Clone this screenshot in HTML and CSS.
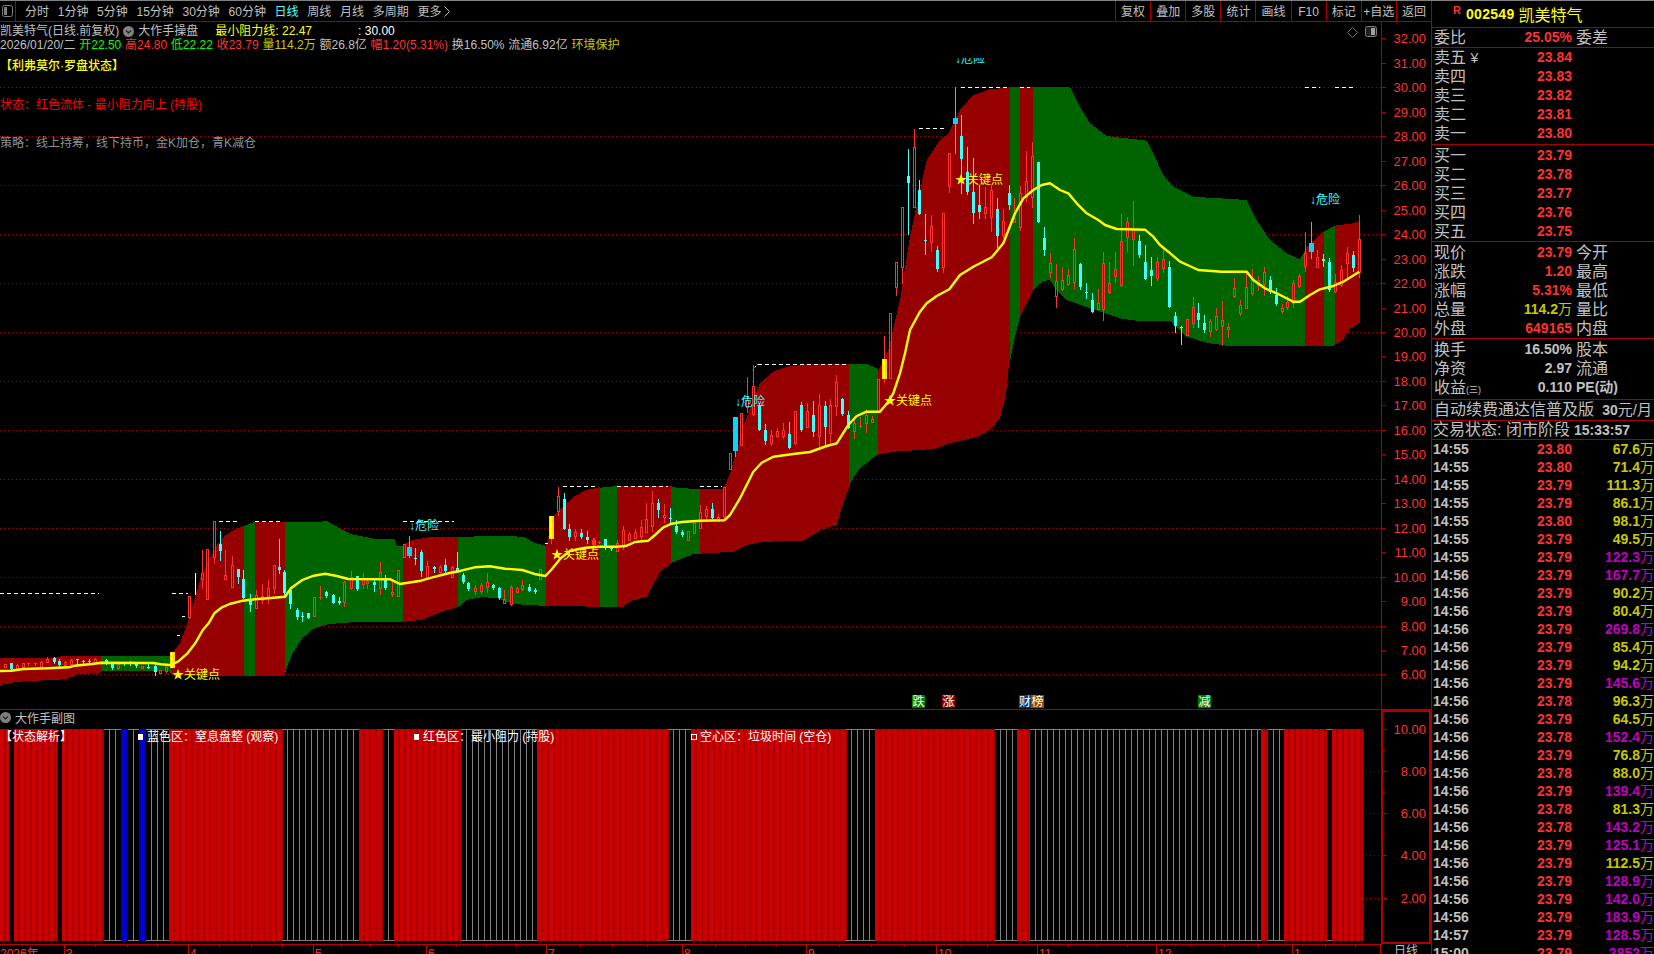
FILE: index.html
```html
<!DOCTYPE html>
<html lang="zh-CN">
<head>
<meta charset="utf-8">
<title>凯美特气 日线</title>
<link rel="stylesheet" href="styles.css">
</head>
<body>
<div class="app">
  <div class="left">
    <header class="topbar">
      <div class="tb-icon">
        <svg width="13" height="14" viewBox="0 0 13 14"><rect x="1.5" y="1.5" width="10" height="11" rx="2" fill="none" stroke="#808080"/><rect x="3" y="3" width="3" height="8" fill="#808080"/></svg>
      </div>
      <nav class="tabs">
        <span>分时</span><span>1分钟</span><span>5分钟</span><span>15分钟</span><span>30分钟</span><span>60分钟</span><span class="tab-on">日线</span><span>周线</span><span>月线</span><span>多周期</span><span>更多<svg class="chev" width="6" height="11" viewBox="0 0 6 11"><path d="M.5.5l5 5-5 5" fill="none" stroke="#c0c0c0"/></svg></span>
      </nav>
      <nav class="tools">
        <span>复权</span><span>叠加</span><span>多股</span><span>统计</span><span>画线</span><span>F10</span><span>标记</span><span>+自选</span><span>返回</span>
      </nav>
    </header>

    <section class="pane">
      <svg id="chart" class="chart" viewBox="0 22 1381 687" width="1381" height="687">
        <g id="grid"></g>
        <g id="band"></g>
        <g id="dashes"></g>
        <g id="candles"></g>
        <g id="ma"></g>
        <text class="mk mk-c" x="409" y="530">↓危险</text>
        <text class="mk mk-c" x="735" y="406">↓危险</text>
        <text class="mk mk-c" x="1310" y="204">↓危险</text>
        <text class="mk mk-y" x="172" y="679">★关键点</text>
        <text class="mk mk-y" x="551" y="559">★关键点</text>
        <text class="mk mk-y" x="884" y="405">★关键点</text>
        <text class="mk mk-y" x="955" y="184">★关键点</text>
        <g class="badge"><rect x="912" y="695" width="13" height="13" fill="#008000"/><text x="912.5" y="706">跌</text></g>
        <g class="badge"><rect x="942" y="695" width="13" height="13" fill="#8a0000"/><text x="942.5" y="706">涨</text></g>
        <g class="badge"><rect x="1019" y="695" width="12" height="13" fill="#003c78"/><text x="1019" y="706">财</text></g>
        <g class="badge"><rect x="1031" y="695" width="13" height="13" fill="#8b4a00"/><text x="1031.5" y="706">榜</text></g>
        <g class="badge"><rect x="1198" y="695" width="13" height="13" fill="#008000"/><text x="1198.5" y="706">减</text></g>
        <path d="M1352.5 27.5l5 5-5 5-5-5z" fill="none" stroke="#707070"/>
        <rect x="1365.5" y="26.5" width="11" height="10" rx="2" fill="#202020" stroke="#808080"/>
        <rect x="1371" y="28" width="4" height="7" fill="#a0a0a0"/>
      </svg>
      <div class="clip-label">↓危险</div>
      <div class="info">
        <div class="info-line">
          <span class="gray">凯美特气(日线.前复权)</span>
          <svg class="round-ic ic-a" width="11" height="11" viewBox="0 0 11 11"><circle cx="5.5" cy="5.5" r="5.5" fill="#808080"/><path d="M3 4.5l2.5 2.5 2.5-2.5" fill="none" stroke="#222" stroke-width="1.2"/></svg>
          <span class="gray">大作手操盘</span>
          <span class="yellow gap-a">最小阻力线: 22.47</span>
          <span class="white gap-b">: 30.00</span>
        </div>
        <div class="info-line quote-line">
          <span class="gray">2026/01/20/二</span>
          <span class="green">开22.50</span>
          <span class="red">高24.80</span>
          <span class="green">低22.22</span>
          <span class="red">收23.79</span>
          <span class="olive">量114.2万</span>
          <span class="gray">额26.8亿</span>
          <span class="red">幅1.20(5.31%)</span>
          <span class="gray">换16.50%</span>
          <span class="gray">流通6.92亿</span>
          <span class="olive">环境保护</span>
        </div>
        <div class="legend legend-title">【利弗莫尔·罗盘状态】</div>
        <div class="legend legend-state">状态：红色流体 - 最小阻力向上 (持股)</div>
        <div class="legend legend-plan">策略：线上持筹，线下持币，金K加仓，青K减仓</div>
      </div>
      <svg id="axis" class="axis" viewBox="1381 22 50 687" width="50" height="687"></svg>
    </section>

    <section class="sub-pane">
      <div class="sub-main">
        <div class="sub-title">
          <svg width="11" height="11" viewBox="0 0 11 11"><circle cx="5.5" cy="5.5" r="5.5" fill="#808080"/><path d="M3 4.5l2.5 2.5 2.5-2.5" fill="none" stroke="#222" stroke-width="1.2"/></svg>
          <span>大作手副图</span>
        </div>
        <svg id="sub" class="sub" viewBox="0 729 1381 215" width="1381" height="215">
          <g id="subbars"></g>
          <g class="sub-notes">
            <text x="0" y="741">【状态解析】</text>
            <rect x="138" y="734" width="5" height="6" fill="#fff"/>
            <text x="147" y="741">蓝色区：窒息盘整 (观察)</text>
            <rect x="414" y="734" width="5" height="6" fill="#fff"/>
            <text x="423" y="741">红色区：最小阻力 (持股)</text>
            <rect x="691.5" y="734.5" width="5" height="5" fill="none" stroke="#fff"/>
            <text x="700" y="741">空心区：垃圾时间 (空仓)</text>
          </g>
        </svg>
      </div>
      <svg class="sub-axis" viewBox="1381 710 50 234" width="50" height="234">
        <rect x="1382" y="711" width="48" height="232" fill="none" stroke="#b00000" stroke-width="2"/>
        <path d="M1383 729.5h4M1383 750.5h2M1383 771.5h4M1383 792.5h2M1383 813.5h4M1383 834.5h2M1383 855.5h4M1383 877.5h2M1383 898.5h4" stroke="#b00000"/>
        <text x="1426" y="733.5">10.00</text>
        <text x="1426" y="775.5">8.00</text>
        <text x="1426" y="817.5">6.00</text>
        <text x="1426" y="859.5">4.00</text>
        <text x="1426" y="902.5">2.00</text>
      </svg>
    </section>

    <section class="date-row">
      <svg id="dates" class="dates" viewBox="0 944 1381 10" width="1381" height="10">
        <g id="dateticks"></g>
        <text x="0" y="958">2026年</text>
        <text x="66" y="958">3</text>
        <text x="190" y="958">4</text>
        <text x="315" y="958">5</text>
        <text x="428" y="958">6</text>
        <text x="548" y="958">7</text>
        <text x="684" y="958">8</text>
        <text x="808" y="958">9</text>
        <text x="938" y="958">10</text>
        <text x="1039" y="958">11</text>
        <text x="1158" y="958">12</text>
        <text x="1294" y="958">1</text>
      </svg>
      <div class="date-cell">日线</div>
    </section>
  </div>

  <aside class="side">
    <div class="s-head">
      <span class="s-r">R</span><span class="s-code">002549</span><span class="s-name">凯美特气</span>
    </div>
    <div class="s-block b-ratio">
      <div class="q"><span class="q-l">委比</span><span class="q-v red">25.05%</span><span class="q-r">委差</span></div>
    </div>
    <div class="s-block b-sell">
      <div class="q"><span class="q-l">卖五 <i class="yen">¥</i></span><span class="q-v red">23.84</span></div>
      <div class="q"><span class="q-l">卖四</span><span class="q-v red">23.83</span></div>
      <div class="q"><span class="q-l">卖三</span><span class="q-v red">23.82</span></div>
      <div class="q"><span class="q-l">卖二</span><span class="q-v red">23.81</span></div>
      <div class="q"><span class="q-l">卖一</span><span class="q-v red">23.80</span></div>
    </div>
    <div class="s-block b-buy">
      <div class="q"><span class="q-l">买一</span><span class="q-v red">23.79</span></div>
      <div class="q"><span class="q-l">买二</span><span class="q-v red">23.78</span></div>
      <div class="q"><span class="q-l">买三</span><span class="q-v red">23.77</span></div>
      <div class="q"><span class="q-l">买四</span><span class="q-v red">23.76</span></div>
      <div class="q"><span class="q-l">买五</span><span class="q-v red">23.75</span></div>
    </div>
    <div class="s-block b-buy">
      <div class="q"><span class="q-l">现价</span><span class="q-v red">23.79</span><span class="q-r">今开</span></div>
      <div class="q"><span class="q-l">涨跌</span><span class="q-v red">1.20</span><span class="q-r">最高</span></div>
      <div class="q"><span class="q-l">涨幅</span><span class="q-v red">5.31%</span><span class="q-r">最低</span></div>
      <div class="q"><span class="q-l">总量</span><span class="q-v olive">114.2<em class="wan">万</em></span><span class="q-r">量比</span></div>
      <div class="q"><span class="q-l">外盘</span><span class="q-v red">649165</span><span class="q-r">内盘</span></div>
    </div>
    <div class="s-block b-stat">
      <div class="q"><span class="q-l">换手</span><span class="q-v gray">16.50%</span><span class="q-r">股本</span></div>
      <div class="q"><span class="q-l">净资</span><span class="q-v gray">2.97</span><span class="q-r">流通</span></div>
      <div class="q"><span class="q-l">收益<i class="mini">(三)</i></span><span class="q-v gray">0.110</span><span class="q-r pe">PE(动)</span></div>
    </div>
    <div class="s-block b-auto">
      <span>自动续费通达信普及版</span><span class="price-tag"><b>30</b>元/月</span>
    </div>
    <div class="s-block b-state">
      <span>交易状态: 闭市阶段</span><b>15:33:57</b>
    </div>
    <div class="ticks">
      <div class="t"><b class="t-time">14:55</b><b class="t-price">23.80</b><b class="t-vol olive">67.6<em>万</em></b></div>
      <div class="t"><b class="t-time">14:55</b><b class="t-price">23.80</b><b class="t-vol olive">71.4<em>万</em></b></div>
      <div class="t"><b class="t-time">14:55</b><b class="t-price">23.79</b><b class="t-vol olive">111.3<em>万</em></b></div>
      <div class="t"><b class="t-time">14:55</b><b class="t-price">23.79</b><b class="t-vol olive">86.1<em>万</em></b></div>
      <div class="t"><b class="t-time">14:55</b><b class="t-price">23.80</b><b class="t-vol olive">98.1<em>万</em></b></div>
      <div class="t"><b class="t-time">14:55</b><b class="t-price">23.79</b><b class="t-vol olive">49.5<em>万</em></b></div>
      <div class="t"><b class="t-time">14:55</b><b class="t-price">23.79</b><b class="t-vol magenta">122.3<em>万</em></b></div>
      <div class="t"><b class="t-time">14:56</b><b class="t-price">23.79</b><b class="t-vol magenta">167.7<em>万</em></b></div>
      <div class="t"><b class="t-time">14:56</b><b class="t-price">23.79</b><b class="t-vol olive">90.2<em>万</em></b></div>
      <div class="t"><b class="t-time">14:56</b><b class="t-price">23.79</b><b class="t-vol olive">80.4<em>万</em></b></div>
      <div class="t"><b class="t-time">14:56</b><b class="t-price">23.79</b><b class="t-vol magenta">269.8<em>万</em></b></div>
      <div class="t"><b class="t-time">14:56</b><b class="t-price">23.79</b><b class="t-vol olive">85.4<em>万</em></b></div>
      <div class="t"><b class="t-time">14:56</b><b class="t-price">23.79</b><b class="t-vol olive">94.2<em>万</em></b></div>
      <div class="t"><b class="t-time">14:56</b><b class="t-price">23.79</b><b class="t-vol magenta">145.6<em>万</em></b></div>
      <div class="t"><b class="t-time">14:56</b><b class="t-price">23.78</b><b class="t-vol olive">96.3<em>万</em></b></div>
      <div class="t"><b class="t-time">14:56</b><b class="t-price">23.79</b><b class="t-vol olive">64.5<em>万</em></b></div>
      <div class="t"><b class="t-time">14:56</b><b class="t-price">23.78</b><b class="t-vol magenta">152.4<em>万</em></b></div>
      <div class="t"><b class="t-time">14:56</b><b class="t-price">23.79</b><b class="t-vol olive">76.8<em>万</em></b></div>
      <div class="t"><b class="t-time">14:56</b><b class="t-price">23.78</b><b class="t-vol olive">88.0<em>万</em></b></div>
      <div class="t"><b class="t-time">14:56</b><b class="t-price">23.79</b><b class="t-vol magenta">139.4<em>万</em></b></div>
      <div class="t"><b class="t-time">14:56</b><b class="t-price">23.78</b><b class="t-vol olive">81.3<em>万</em></b></div>
      <div class="t"><b class="t-time">14:56</b><b class="t-price">23.78</b><b class="t-vol magenta">143.2<em>万</em></b></div>
      <div class="t"><b class="t-time">14:56</b><b class="t-price">23.79</b><b class="t-vol magenta">125.1<em>万</em></b></div>
      <div class="t"><b class="t-time">14:56</b><b class="t-price">23.79</b><b class="t-vol olive">112.5<em>万</em></b></div>
      <div class="t"><b class="t-time">14:56</b><b class="t-price">23.79</b><b class="t-vol magenta">128.9<em>万</em></b></div>
      <div class="t"><b class="t-time">14:56</b><b class="t-price">23.79</b><b class="t-vol magenta">142.0<em>万</em></b></div>
      <div class="t"><b class="t-time">14:56</b><b class="t-price">23.79</b><b class="t-vol magenta">183.9<em>万</em></b></div>
      <div class="t"><b class="t-time">14:57</b><b class="t-price">23.79</b><b class="t-vol magenta">128.5<em>万</em></b></div>
      <div class="t"><b class="t-time">15:00</b><b class="t-price">23.79</b><b class="t-vol magenta">2852<em>万</em></b></div>
    </div>
  </aside>
</div>
<script src="chart.js"></script>
</body>
</html>
```

FILE: styles.css
```css
* { box-sizing: border-box; margin: 0; padding: 0; }
html, body { width: 1654px; height: 954px; overflow: hidden; background: #000; }
body { font-family: "Liberation Sans", "Noto Sans CJK SC", sans-serif; font-size: 12px; color: #c0c0c0; }
em, i { font-style: normal; }

.app { display: flex; width: 1654px; height: 954px; border-top: 1px solid #808080; overflow: hidden; }
.left { width: 1431px; flex: none; display: flex; flex-direction: column; }

.gray { color: #c0c0c0; }
.white { color: #fff; }
.red { color: #ff3232; }
.green { color: #00ff00; }
.yellow { color: #ffff00; }
.olive { color: #c8c800; }
.magenta { color: #c000c0; }

/* top bar */
.topbar { height: 21px; flex: none; display: flex; border-bottom: 1px solid #a80000; }
.tb-icon { width: 16px; flex: none; border-right: 1px solid #a80000; padding: 3px 0 0 1px; }
.tabs { display: flex; gap: 8.7px; padding-left: 9px; line-height: 22px; font-size: 12px; white-space: nowrap; }
.tab-on { color: #55ffff; }
.chev { margin-left: 3px; vertical-align: -1px; }
.tools { margin-left: auto; width: 316px; display: grid; grid-template-columns: repeat(9, 1fr); line-height: 22px; }
.tools span { border-left: 1px solid #a80000; text-align: center; }

/* main chart pane */
.pane { position: relative; height: 688px; flex: none; display: flex; border-bottom: 1px solid #a80000; }
.chart { display: block; flex: none; background: #000; }
.axis { display: block; flex: none; }
.axis text { font-size: 13px; fill: #ff3232; text-anchor: end; }
.mk { font-size: 12px; }
.mk-c { fill: #30ffff; }
.mk-y { fill: #ffff00; }
.badge text { font-size: 12px; fill: #fff; }

.clip-label { position: absolute; left: 955px; top: 36px; height: 6px; overflow: hidden; color: #30ffff; line-height: 3px; font-size: 12px; }

.info { position: absolute; left: 0; top: 2px; display: flex; flex-direction: column; }
.info-line { display: flex; align-items: center; height: 14px; line-height: 14px; white-space: nowrap; }
.quote-line { gap: 3.8px; }
.round-ic { margin-left: 4px; margin-right: 4px; }
.gap-a { margin-left: 17px; }
.gap-b { margin-left: 46px; }
.legend { line-height: 14px; white-space: nowrap; }
.legend-title { color: #ffff00; margin-top: 7px; font-weight: 500; }
.legend-state { color: #ff0000; margin-top: 25px; }
.legend-plan { color: #909090; margin-top: 24px; }

/* sub chart */
.sub-pane { height: 234px; flex: none; display: flex; }
.sub-main { width: 1381px; flex: none; display: flex; flex-direction: column; }
.sub-title { height: 19px; flex: none; display: flex; align-items: center; gap: 4px; padding-bottom: 4px; color: #c0c0c0; }
.sub { display: block; }
.sub-notes text { font-size: 12px; fill: #fff; }
.sub-axis { display: block; flex: none; }
.sub-axis text { font-size: 13px; fill: #ff3232; text-anchor: end; }

/* dates */
.date-row { height: 10px; flex: none; display: flex; overflow: hidden; }
.dates { display: block; flex: none; }
.dates text { font-size: 12px; fill: #ff3232; }
.date-cell { width: 50px; text-align: center; line-height: 14px; color: #c0c0c0; font-size: 12px; }

/* side panel */
.side { flex: 1; min-width: 0; display: flex; flex-direction: column; border-left: 1px solid #a80000; height: 953px; overflow: hidden; font-size: 16px; }
.s-head { height: 27px; flex: none; position: relative; display: flex; align-items: center; padding-left: 34px; border-bottom: 1px solid #a80000; color: #ffff00; }
.s-r { position: absolute; left: 21px; top: 3px; font-size: 11px; font-weight: 700; color: #ff3232; }
.s-code { font-size: 14px; font-weight: 700; letter-spacing: .3px; }
.s-name { margin-left: 4px; font-size: 16px; }
.s-block { flex: none; border-bottom: 1px solid #a80000; }
.b-ratio { height: 20px; }
.b-sell { height: 97px; }
.b-buy { height: 97px; padding-top: 1px; }
.b-stat { height: 61px; padding-top: 1px; }
.q { display: flex; height: 19px; line-height: 19px; padding-left: 2px; white-space: nowrap; color: #c0c0c0; }
.q-l { width: 58px; flex: none; }
.q-v { width: 80px; flex: none; text-align: right; font-size: 14px; font-weight: 700; }
.q-r { margin-left: 4px; }
.pe { font-size: 14px; font-weight: 700; }
.mini { font-size: 9px; }
.wan { font-size: 14px; font-weight: 400; }
.yen { font-size: 14px; }
.b-auto { height: 21px; display: flex; justify-content: space-between; line-height: 20px; padding: 0 2px; white-space: nowrap; }
.price-tag { font-size: 15px; }
.price-tag b { font-size: 14px; }
.b-state { height: 19px; line-height: 18px; display: flex; gap: 4px; padding-left: 1px; white-space: nowrap; }
.b-state b { font-size: 14px; }
.ticks { flex: 1; min-height: 0; overflow: hidden; }
.t { display: flex; height: 18px; line-height: 18px; padding-left: 1px; font-size: 14px; white-space: nowrap; }
.t-time { width: 60px; flex: none; color: #c0c0c0; }
.t-price { width: 79px; flex: none; text-align: right; color: #ff3232; }
.t-vol { flex: 1; text-align: right; }
.t-vol em { font-weight: 400; font-size: 14px; }
```

FILE: chart.js
```js
(function () {
  var NS = 'http://www.w3.org/2000/svg';
  function el(parent, name, attrs, text) {
    var n = document.createElementNS(NS, name);
    for (var k in attrs) n.setAttribute(k, attrs[k]);
    if (text !== undefined) n.textContent = text;
    parent.appendChild(n);
    return n;
  }
  var $ = function (id) { return document.getElementById(id); };

  /* Data is held per chart section, each with its own scale. */
  var A = { x0: 0, sx: 2.613, y0: 480 };
  var B = { x0: 560, sx: 3, y0: 340 };
  var C = { x0: 860, sx: 3, y0: 50 };
  function px(s, X) { return s.x0 + X / s.sx; }
  function py(s, Y) { return s.y0 + Y / 3; }
  function pts(s, list) { return list.map(function (p) { return [px(s, p[0]), py(s, p[1])]; }); }

  var RED = '#960000', GREEN = '#006400';

  /* price grid */
  var yOf = function (p) { return 87.4 + (30 - p) * 24.46; };
  var grid = $('grid');
  for (var p = 30; p >= 6; p -= 2) {
    var gy = Math.round(yOf(p)) + 0.5;
    el(grid, 'line', { x1: 0, x2: 1381, y1: gy, y2: gy, stroke: '#a00000', 'stroke-dasharray': '1 3' });
  }
  var axis = $('axis');
  el(axis, 'rect', { x: 1381, y: 22, width: 1, height: 687, fill: '#a80000' });
  for (p = 32; p >= 6; p -= 1) {
    var ay = Math.round(yOf(p));
    el(axis, 'rect', { x: 1381, y: ay, width: 5, height: 1, fill: '#a80000' });
    el(axis, 'text', { x: 1426, y: ay + 5 }, p.toFixed(2));
  }

  /* band outline */
  var top = pts(A, [[0, 535], [130, 535], [165, 528], [445, 528], [470, 490], [490, 430], [505, 370], [525, 290], [545, 240], [570, 190], [590, 165], [610, 150], [637, 138], [665, 126], [830, 126], [855, 123], [885, 143], [920, 163], [980, 177], [1030, 178], [1037, 197], [1053, 197], [1075, 180], [1120, 172], [1200, 170], [1340, 168], [1370, 172], [1400, 190], [1427, 197], [1445, 110], [1470, 80], [1500, 50], [1530, 30], [1568, 22]])
    .concat(pts(B, [[120, 443], [170, 438], [330, 438], [350, 443], [420, 448], [490, 448], [510, 400], [530, 330], [550, 260], [575, 190], [600, 130], [640, 95], [680, 80], [740, 73], [920, 72], [950, 84]]))
    .concat(pts(C, [[55, 960], [85, 900], [120, 750], [150, 560], [200, 330], [240, 270], [265, 250], [300, 180], [340, 135], [390, 118], [450, 112], [630, 112], [660, 170], [690, 220], [740, 258], [860, 272], [880, 310], [910, 375], [940, 410], [1000, 440], [1160, 450], [1190, 510], [1230, 570], [1280, 610], [1320, 628], [1340, 590], [1390, 545], [1425, 527], [1480, 520], [1499, 512]]));
  var bottom = pts(A, [[0, 615], [50, 605], [130, 600], [172, 598], [205, 583], [262, 578], [265, 572], [440, 572], [452, 587], [745, 587], [745, 578], [760, 530], [790, 475], [820, 445], [860, 432], [920, 427], [1060, 425], [1100, 420], [1160, 393], [1200, 380], [1220, 360], [1260, 351], [1300, 355], [1340, 372], [1427, 378], [1568, 380]])
    .concat(pts(B, [[190, 800], [215, 782], [262, 770], [300, 695], [335, 668], [400, 642], [520, 635], [560, 615], [610, 605], [730, 603], [790, 565], [830, 555], [850, 490], [875, 420], [900, 385], [950, 345], [1000, 335], [1120, 327], [1170, 310], [1260, 288]]))
    .concat([[990, 430], [1000, 418], [1006, 395]])
    .concat(pts(C, [[445, 960], [465, 860], [480, 800], [520, 720], [550, 693], [570, 690], [590, 720], [620, 750], [690, 775], [780, 805], [830, 812], [930, 812], [980, 860], [1040, 878], [1100, 887], [1420, 887], [1450, 870], [1470, 835], [1499, 818]]));
  var outline = 'M' + top.concat(bottom.slice().reverse()).map(function (q) { return q[0].toFixed(1) + ' ' + q[1].toFixed(1); }).join('L') + 'Z';

  var regions = [[0, 101, 'r'], [101, 172, 'g'], [172, 244, 'r'], [244, 255, 'g'], [255, 285, 'r'], [285, 403, 'g'], [403, 458, 'r'], [458, 546, 'g'], [546, 600, 'r'], [600, 617, 'g'], [617, 671, 'r'], [671, 700, 'g'], [700, 849, 'r'], [849, 878, 'g'], [878, 1010, 'r'], [1010, 1020, 'g'], [1020, 1033, 'r'], [1033, 1305, 'g'], [1305, 1324, 'r'], [1324, 1335, 'g'], [1335, 1360, 'r']];
  var defs = el($('chart'), 'defs', {});
  ['r', 'g'].forEach(function (kind) {
    var c = el(defs, 'clipPath', { id: 'clip-' + kind });
    regions.forEach(function (r) { if (r[2] === kind) el(c, 'rect', { x: r[0], y: 0, width: r[1] - r[0], height: 900 }); });
    el($('band'), 'path', { d: outline, fill: kind === 'r' ? RED : GREEN, 'clip-path': 'url(#clip-' + kind + ')', 'shape-rendering': 'crispEdges' });
  });

  /* white dashed resistance marks: [x1, x2, y] */
  var dashes = [[0, 99, 593], [172, 188, 593], [219, 240, 521], [255, 283, 521], [403, 454, 521], [563, 596, 486], [617, 668, 486], [700, 722, 486], [758, 848, 364], [961, 1007, 87], [1020, 1030, 87], [919, 947, 128], [1305, 1320, 87], [1335, 1356, 87], [182, 185, 616], [177, 180, 635], [545, 548, 543]];
  dashes.forEach(function (d) {
    el($('dashes'), 'line', { x1: d[0], x2: d[1], y1: d[2] + 0.5, y2: d[2] + 0.5, stroke: '#fff', 'stroke-dasharray': '4 3' });
  });
  el($('dashes'), 'rect', { x: 195, y: 573, width: 1, height: 22, fill: '#fff' });
  el($('dashes'), 'path', { d: 'M753 371L755 367L758 364', fill: 'none', stroke: '#fff', 'stroke-dasharray': '2 2' });

  /* candles: X, high, bodyTop, bodyBottom, low, kind */
  var setA = [[12,552,553,560,562,'r'],[30,548,550,568,570,'c'],[45,553,556,565,567,'r'],[60,548,550,560,562,'r'],[74,548,550,553,555,'r'],[92,548,549,553,554,'r'],[108,543,546,557,558,'r'],[124,530,536,545,547,'r'],[140,530,534,546,550,'c'],[155,538,542,555,558,'c'],[171,543,546,555,556,'r'],[186,538,541,552,553,'r'],[202,536,538,541,555,'c'],[217,540,542,545,552,'c'],[233,538,543,546,552,'c'],[247,535,538,547,549,'r'],[262,543,545,549,551,'r'],[278,538,540,552,553,'c'],[293,549,552,564,568,'c'],[309,550,553,564,566,'r'],[324,549,550,553,554,'c'],[340,543,549,552,556,'c'],[356,550,551,559,561,'c'],[372,558,558,563,563,'r'],[388,550,561,564,565,'c'],[404,556,558,575,585,'c'],[419,570,571,578,578,'r'],[435,559,561,573,575,'r'],[450,517,517,565,565,'y'],
  [495,347,349,412,415,'r'],[527,210,280,297,325,'r'],[542,207,207,357,357,'r'],[558,123,123,230,250,'r'],[574,153,192,213,240,'c'],[589,210,285,297,297,'r'],[605,228,255,320,320,'r'],[621,267,267,291,310,'c'],[636,270,297,355,355,'c'],[652,342,358,375,392,'c'],[668,330,345,383,383,'r'],[684,312,347,360,370,'r'],[699,300,325,348,368,'r'],[715,255,255,325,340,'r'],[728,177,262,270,278,'c'],[743,270,275,340,345,'c'],[759,320,330,372,383,'c'],[775,385,390,412,417,'c'],[790,395,407,412,423,'c'],[805,398,400,413,415,'c'],[821,352,352,407,407,'r'],[837,318,350,355,358,'r'],[853,333,337,347,352,'c'],[869,343,345,368,370,'c'],[885,352,363,370,373,'c'],[900,303,305,367,377,'r'],[916,273,290,325,327,'r'],[932,288,288,328,330,'c'],[948,280,298,312,325,'r'],[960,295,302,308,323,'r'],[976,298,305,316,333,'c'],[992,247,275,325,342,'r'],[1007,285,300,325,328,'c'],[1023,307,337,342,347,'r'],[1039,270,270,347,347,'r'],[1055,193,193,232,232,'r'],[1070,168,202,228,232,'s'],[1085,205,233,234,252,'c'],[1101,210,215,273,288,'c'],[1117,243,258,290,292,'r'],[1133,258,261,268,276,'c'],[1149,255,262,275,280,'r'],[1164,237,255,273,275,'c'],[1180,258,260,290,292,'r'],[1195,217,265,275,277,'c'],[1209,278,285,305,308,'c'],[1224,306,310,327,330,'c'],[1240,315,324,332,343,'r'],[1256,310,316,332,340,'r'],[1272,280,305,322,335,'r'],[1287,313,316,324,327,'c'],[1303,320,325,355,358,'c'],[1318,330,356,368,370,'r'],[1334,315,322,372,375,'r'],[1350,322,325,335,337,'r'],[1365,300,315,327,330,'r'],[1381,313,322,332,334,'c'],[1397,325,330,336,340,'c'],[1412,267,268,296,296,'r'],[1441,108,108,177,192,'y'],[1457,22,48,92,105,'r'],[1473,40,57,147,147,'c'],[1488,132,147,172,180,'c'],[1503,148,157,167,180,'r'],[1519,147,158,172,175,'c'],[1535,153,170,180,188,'c'],[1551,175,180,192,195,'r']];
  var setB = [[100,595,600,611,615,'r'],[118,603,605,608,609,'r'],[136,597,597,622,628,'c'],[154,620,623,626,630,'c'],[172,600,610,632,632,'r'],[190,558,570,622,627,'r'],[208,577,583,600,600,'r'],[226,567,577,593,593,'r'],[244,540,562,588,598,'r'],[259,490,538,575,575,'r'],[277,453,490,557,572,'r'],[295,478,490,510,530,'c'],[313,492,525,530,545,'r'],[331,503,535,537,552,'c'],[349,540,558,576,580,'c'],[367,570,575,585,588,'c'],[385,573,573,600,600,'r'],[403,540,550,578,578,'r'],[421,495,515,563,563,'r'],[439,497,507,527,535,'r'],[457,490,507,533,533,'c'],[475,522,532,542,542,'r'],[493,441,441,527,541,'r'],[511,340,340,388,388,'r'],[526,231,231,332,347,'s'],[544,220,220,314,314,'r'],[562,112,180,200,215,'r'],[580,75,138,222,225,'r'],[598,190,195,270,270,'c'],[616,252,270,303,312,'c'],[634,270,285,308,315,'r'],[652,265,273,288,292,'r'],[670,250,270,287,295,'r'],[688,247,282,323,323,'c'],[706,213,213,308,311,'r'],[724,187,195,270,272,'c'],[742,190,213,260,260,'r'],[760,183,225,275,287,'c'],[778,163,195,288,322,'r'],[796,183,198,260,315,'c'],[811,178,195,278,310,'r'],[829,105,127,197,225,'r'],[847,175,177,222,224,'c'],[865,213,225,265,265,'c'],[883,228,248,272,293,'r'],[901,230,258,262,262,'r'],[919,207,226,250,275,'r'],[937,228,236,245,245,'r'],[955,118,118,213,213,'r']];
  var setC = [[73,858,927,987,1000,'y'],[91,790,790,984,984,'r'],[109,637,637,710,735,'r'],[127,472,472,650,698,'r'],[145,297,378,400,552,'c'],[163,237,292,470,470,'r'],[178,390,420,492,492,'c'],[196,492,570,573,612,'c'],[214,495,528,575,603,'r'],[232,588,600,658,662,'c'],[250,490,490,650,665,'r'],[268,310,310,407,425,'r'],[286,112,205,222,308,'s'],[304,195,258,326,428,'c'],[322,290,365,426,433,'c'],[340,325,427,490,518,'c'],[358,405,465,485,503,'c'],[376,410,472,488,503,'r'],[394,405,420,502,542,'r'],[412,445,478,557,590,'c'],[430,477,514,555,560,'r'],[448,405,430,465,476,'c'],[463,443,505,515,515,'r'],[481,408,430,530,540,'r'],[499,303,393,440,452,'r'],[517,277,318,440,470,'r'],[535,336,336,515,515,'c'],[553,532,565,600,615,'c'],[571,610,640,665,680,'r'],[589,642,693,737,770,'r'],[607,652,690,718,720,'r'],[625,657,676,703,705,'r'],[643,564,598,695,713,'r'],[661,638,642,712,718,'c'],[679,700,727,729,745,'c'],[697,730,750,785,785,'c'],[715,718,760,776,776,'r'],[730,606,640,776,810,'r'],[748,637,700,727,728,'r'],[766,605,658,677,695,'r'],[784,492,574,706,707,'r'],[802,500,517,562,602,'r'],[820,453,538,568,645,'r'],[838,555,573,615,622,'c'],[856,585,636,686,686,'c'],[874,622,660,678,704,'c'],[892,620,637,683,690,'r'],[910,596,627,653,665,'r'],[928,633,650,770,770,'c'],[946,786,798,827,846,'c'],[964,828,832,835,882,'c'],[982,807,808,855,855,'r'],[1000,741,772,818,830,'r'],[1015,760,788,810,830,'c'],[1033,795,820,840,845,'c'],[1051,808,814,842,858,'r'],[1069,775,798,838,840,'r'],[1087,753,811,827,884,'r'],[1105,820,832,838,860,'r'],[1123,685,715,738,742,'r'],[1141,750,765,790,795,'r'],[1159,670,712,773,773,'r'],[1177,658,685,728,735,'r'],[1195,678,690,706,720,'r'],[1213,652,667,702,735,'r'],[1231,678,690,725,730,'c'],[1249,715,735,762,765,'c'],[1267,762,775,782,790,'r'],[1282,738,756,770,778,'r'],[1300,690,700,760,772,'r'],[1318,672,677,708,712,'r'],[1336,547,610,647,662,'r'],[1354,517,580,605,623,'s'],[1372,600,622,650,652,'r'],[1390,612,627,632,647,'c'],[1408,625,636,720,724,'c'],[1426,672,697,723,725,'r'],[1444,645,660,705,708,'r'],[1462,590,610,640,685,'r'],[1480,603,615,655,662,'c'],[1498,495,568,665,680,'r']];

  var cg = $('candles');
  function rect(g, x, y, w, h, fill) { if (h > 0) el(g, 'rect', { x: x, y: y, width: w, height: h, fill: fill }); }
  function draw(s, list) {
    list.forEach(function (c) {
      var x = Math.round(px(s, c[0]));
      var hi = Math.round(py(s, c[1])), t = Math.round(py(s, c[2])), b = Math.round(py(s, c[3])), lo = Math.round(py(s, c[4]));
      var kind = c[5];
      if (kind === 'r') {
        rect(cg, x, hi, 1, t - hi, '#ff3232');
        rect(cg, x, b, 1, lo - b + 1, '#ff3232');
        if (b - t < 2) { rect(cg, x - 1, t, 3, Math.max(b - t, 1), '#ff3232'); }
        else { el(cg, 'rect', { x: x - 0.5, y: t + 0.5, width: 2, height: b - t, fill: 'none', stroke: '#ff3232' }); }
      } else if (kind === 'y') {
        rect(cg, x, hi, 1, lo - hi, '#ff3232');
        rect(cg, x - 2, t, 5, b - t, '#ffd800');
        rect(cg, x - 1, t, 2, b - t, '#ffff00');
      } else {
        var col = kind === 's' ? '#00d8ff' : '#40ffff';
        var w = kind === 's' ? 5 : 3;
        rect(cg, x, hi, 1, lo - hi + 1, col);
        rect(cg, x - (w - 1) / 2, t, w, Math.max(b - t, 1), col);
      }
    });
  }
  draw(A, setA); draw(B, setB); draw(C, setC);

  /* moving line */
  var ma = pts(A, [[0,573],[30,572],[60,567],[125,565],[180,562],[195,557],[240,552],[265,548],[400,549],[420,553],[445,555],[465,545],[490,520],[510,490],[530,450],[545,430],[560,400],[580,382],[600,372],[635,362],[665,358],[700,355],[745,350],[760,325],[790,300],[820,287],[850,281],[880,288],[910,297],[1020,298],[1045,312],[1100,302],[1130,292],[1175,279],[1205,272],[1240,262],[1280,259],[1320,266],[1365,270],[1400,283],[1425,288],[1440,270],[1465,235],[1490,212],[1530,203],[1568,200]])
    .concat(pts(B, [[170,620],[200,617],[225,606],[265,602],[285,585],[310,562],[335,551],[365,546],[420,542],[493,541],[510,525],[540,475],[565,425],[580,395],[605,368],[640,350],[700,342],[750,336],[800,318],[830,310],[865,255],[890,228],[920,215],[960,215],[985,185],[1000,160],[1020,100],[1035,40]]))
    .concat(pts(C, [[150,840],[180,785],[200,760],[230,738],[268,718],[300,675],[340,650],[395,622],[430,580],[465,490],[490,445],[520,420],[545,405],[570,400],[600,420],[625,430],[650,460],[680,490],[715,510],[735,525],[770,537],[855,539],[880,560],[900,585],[925,605],[960,635],[1015,660],[1085,665],[1160,665],[1180,690],[1215,715],[1250,730],[1300,755],[1320,755],[1350,735],[1380,718],[1420,708],[1450,695],[1498,665]]));
  el($('ma'), 'polyline', { points: ma.map(function (q) { return q[0].toFixed(1) + ',' + q[1].toFixed(1); }).join(' '), fill: 'none', stroke: '#ffff00', 'stroke-width': 2.4, 'stroke-linejoin': 'round' });

  /* sub chart columns: [from, to, kind] with r = red, n = hollow, b = blue, k = empty */
  var cols = [[0,9,'r'],[14,57,'r'],[62,104,'r'],[104,121,'n'],[121,128,'b'],[128,139,'n'],[139,146,'b'],[146,169,'n'],[169,282,'r'],[282,359,'n'],[359,383,'r'],[383,394,'n'],[394,461,'r'],[461,537,'n'],[537,668,'r'],[668,691,'n'],[691,846,'r'],[846,875,'n'],[875,995,'r'],[995,1017,'n'],[1017,1030,'r'],[1030,1261,'n'],[1261,1268,'r'],[1268,1284,'n'],[1284,1327,'r'],[1327,1332,'n'],[1332,1363,'r']];
  var sb = $('subbars');
  var Y1 = 729, Y2 = 941;
  cols.forEach(function (c) {
    var a = c[0], b = c[1], x;
    if (c[2] === 'r') {
      rect(sb, a, Y1, b - a, Y2 - Y1, '#cc0000');
      for (x = a + 4; x < b; x += 6) rect(sb, x, Y1, 2, Y2 - Y1, '#a80000');
    } else if (c[2] === 'b') {
      rect(sb, a, Y1, b - a, Y2 - Y1, '#0000c0');
      rect(sb, a + 2, Y1, b - a - 4, Y2 - Y1, '#0000d8');
    } else {
      rect(sb, a, Y1, b - a, 1, '#808080');
      rect(sb, a, Y2 - 1, b - a, 1, '#808080');
      for (x = a + 5; x < b; x += 6) rect(sb, x, Y1, 1, Y2 - Y1, '#808080');
    }
  });
  [771, 813, 855, 898].forEach(function (y) {
    el(sb, 'line', { x1: 1366, x2: 1381, y1: y + 0.5, y2: y + 0.5, stroke: '#a00000', 'stroke-dasharray': '1 3' });
  });

  /* date axis */
  var dt = $('dateticks');
  rect(dt, 0, 944, 1381, 1, '#c00000');
  [64, 188, 313, 426, 546, 682, 806, 936, 1037, 1156, 1292, 1380].forEach(function (x) { rect(dt, x, 944, 1, 10, '#c00000'); });
  [95, 127, 157, 219, 251, 282, 341, 370, 398, 456, 486, 516, 580, 612, 647, 715, 745, 776, 839, 871, 904, 961, 987, 1068, 1097, 1127, 1190, 1224, 1258, 1325, 1355].forEach(function (x) { rect(dt, x, 944, 1, 3, '#c00000'); });
})();
```
